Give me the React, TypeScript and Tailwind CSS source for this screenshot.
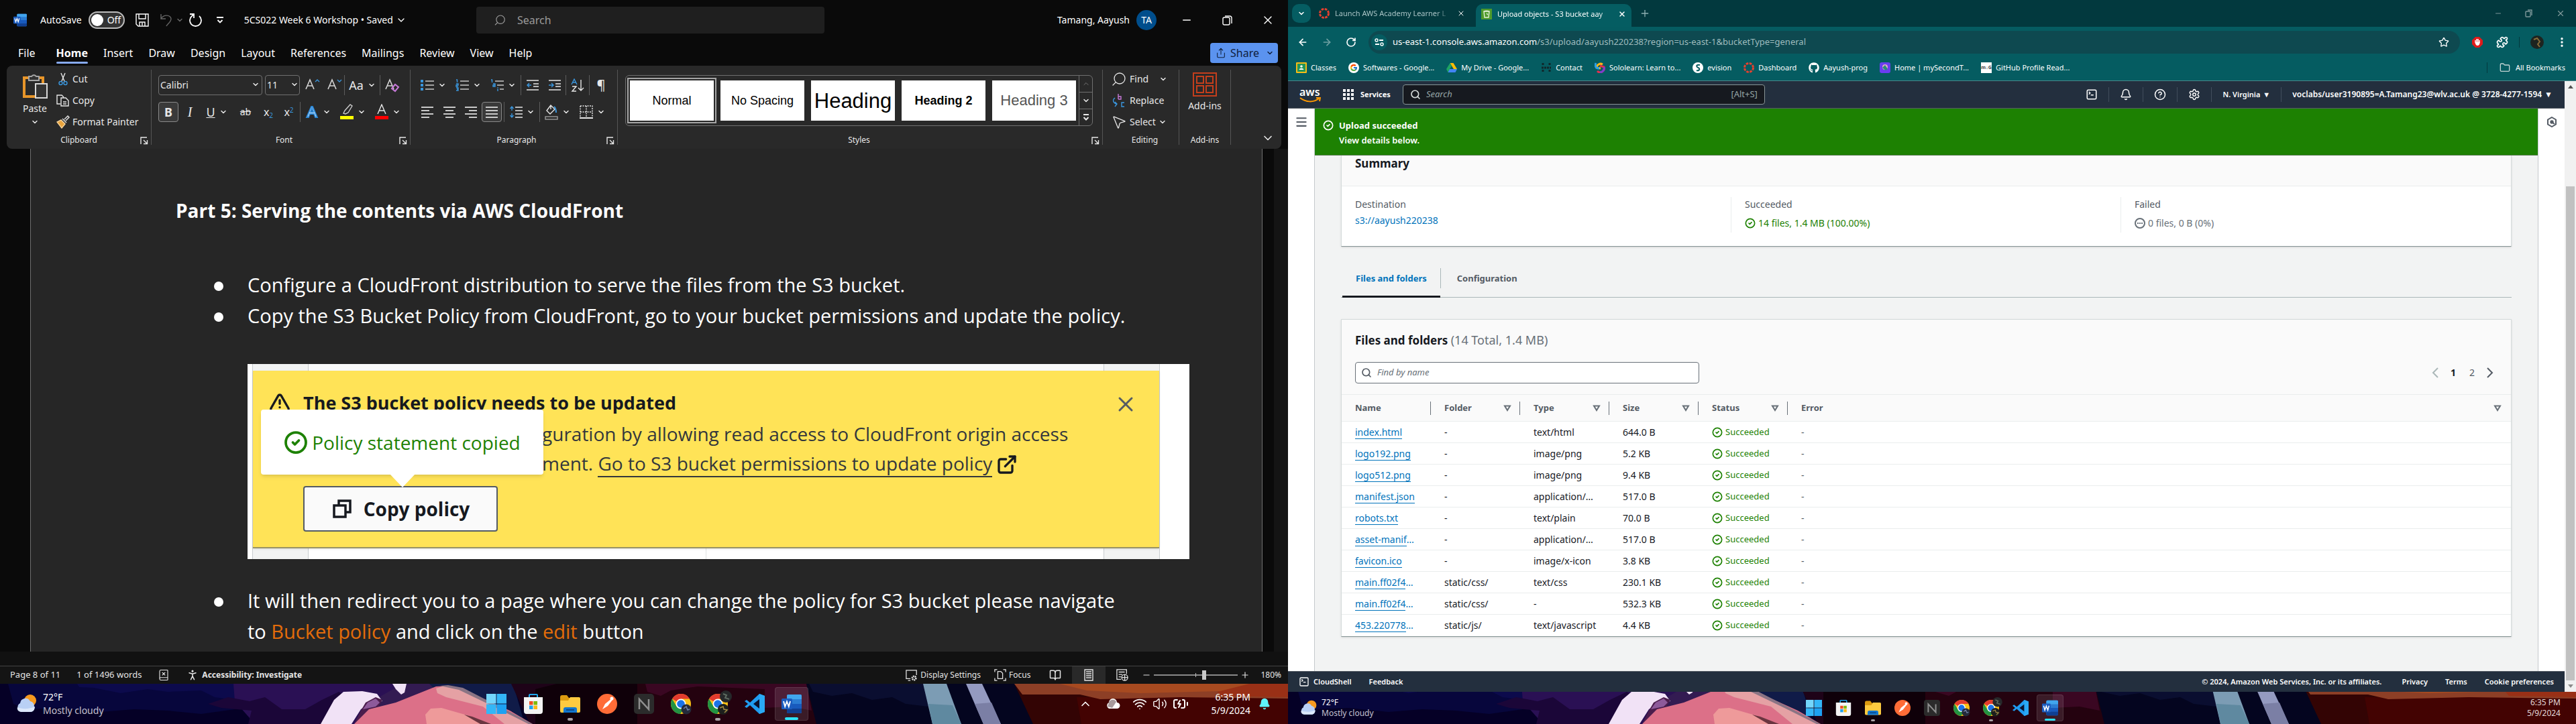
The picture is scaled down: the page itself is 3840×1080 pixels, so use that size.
import React from "react";
import {
  X, Minus, Plus, ChevronDown, ChevronUp, Search, Star, ArrowLeft, ArrowRight, RotateCw,
  MoreVertical, Folder, Menu, Bell, HelpCircle, Settings, SquareTerminal, Volume2, Wifi,
  BatteryCharging, MousePointer2, Puzzle, CircleCheck, ExternalLink, TriangleAlert, BookOpen,
  Share, BookX, PersonStanding,
} from "lucide-react";
import { FaGithub } from "react-icons/fa";
import { FcGoogle } from "react-icons/fc";

type Kids = { children?: React.ReactNode; className?: string };

const Svg = ({ children, className = "h-5 w-5", box = "0 0 20 20" }: Kids & { box?: string }) => (
  <svg viewBox={box} className={`shrink-0 ${className}`} fill="none" stroke="currentColor" strokeWidth="1.4" aria-hidden="true">
    {children}
  </svg>
);

const Chev = () => <ChevronDown className="h-3 w-3 shrink-0" strokeWidth={3} />;
const Rule = ({ className = "h-[30px] bg-[#5c5c5c]" }: { className?: string }) => <span className={`w-px shrink-0 ${className}`} />;

/* ---------- taskbar ---------- */

const Wallpaper = () => (
  <svg viewBox="0 0 1920 60" preserveAspectRatio="none" className="absolute bottom-0 left-0 h-[60px] w-full" aria-hidden="true">
    <rect width="1920" height="60" fill="#050026" />
    <path d="M12 0H350V38L300 45L250 40L200 38L150 42L90 36L40 38L20 30Z" fill="#07063c" />
    <path d="M115 0H350V24L320 20L300 10L250 12L220 8L180 14L140 6L118 5Z" fill="#0c0a4c" />
    <path d="M348 0H670V60H380L350 26Z" fill="#2a1054" />
    <path d="M310 30L340 20L372 26L395 20L420 38L455 38L480 24L505 12L520 20V60H370L375 40L330 36Z" fill="#1b0638" />
    <path d="M600 0H700V60H560L565 20Z" fill="#331b52" />
    <path d="M640 0H765L782 60H700Z" fill="#101b48" />
    <path d="M762 0H960V60H790Z" fill="#1e0318" />
    <path d="M798 8L830 0H950V60H798Z" fill="#0f0009" />
    <path d="M478 60L498 24L512 12L540 11L562 15L570 26L552 28L538 38L524 60Z" fill="#f1e2f6" />
    <path d="M538 40L545 28L560 20L570 24L564 34L550 38L528 60Z" fill="#4b1d4c" />
    <path d="M541 38L548 28L560 22L566 28L560 34Z" fill="#8d5a9a" />
    <path d="M585 0H606L603 13L598 16L590 8Z" fill="#f1e2f6" />
    <path d="M528 60L550 38L590 28L620 16L650 4L668 3L720 22L760 40L794 60Z" fill="#dc7088" />
    <path d="M650 7L662 3L684 6L730 28L770 48L792 60H752L720 34L665 20L652 14Z" fill="#e5a1a4" />
    <path d="M634 46L642 37L658 36L700 48L722 60H636Z" fill="#ee9a9a" />
    <path d="M692 46L704 49L732 60H716Z" fill="#6a3540" />
    <path d="M656 3L668 2L690 6L760 42L794 60H788L740 36L684 9Z" fill="#8a7484" />
    <path d="M950 0H1205L1218 60H950Z" fill="#24020f" />
    <path d="M962 0H1202L1210 40L1180 34L1140 36V8L1040 4L1000 10L985 18L965 12Z" fill="#3a0722" />
    <path d="M1202 0H1530L1540 60H1217Z" fill="#04051f" />
    <path d="M1206 0H1380L1384 34L1350 30L1330 20L1300 24L1270 14L1240 18L1212 12Z" fill="#0a0e30" />
    <path d="M1376 0H1411L1433 60H1390Z" fill="#7c9cb4" />
    <path d="M1384 30L1420 32L1433 60H1390Z" fill="#5f89a0" />
    <path d="M1440 0H1464L1492 60H1466Z" fill="#949ac0" />
    <path d="M1453 30L1478 28L1492 60H1466Z" fill="#7b7fa5" />
    <path d="M1512 0H1920V60H1540Z" fill="#330404" />
    <path d="M1605 20H1920V60H1612Z" fill="#430302" />
    <path d="M1512 0H1920V22L1760 20L1640 23L1610 16L1524 16Z" fill="#8d3f26" />
    <path d="M1580 0H1862L1860 10L1700 14L1620 10Z" fill="#a74a20" />
    <path d="M1862 0H1920V20L1820 18L1815 12Z" fill="#993016" />
  </svg>
);

const Weather = ({ className }: { className: string }) => (
  <svg viewBox="0 0 32 32" className={className} aria-hidden="true">
    <circle cx="21" cy="11" r="9" fill="#f79a1e" />
    <path d="M8 28a7 7 0 0 1-2-13 8 8 0 0 1 15-3 8 8 0 0 1 6 8c1 5-2 8-6 8Z" fill="#b9d0f5" />
    <path d="M8 28c-5 0-7-4-6-7 6 3 18 3 26-1 0 5-3 8-7 8Z" fill="#dce8fb" />
  </svg>
);

const ChromeLogo = ({ avatar = false }: { avatar?: boolean }) => (
  <svg viewBox="0 0 30 30" className="h-full w-full overflow-visible" aria-hidden="true">
    <circle cx="15" cy="15" r="15" fill="#fbc116" />
    <path d="M15 15L2 7.500A15 15 0 0 1 28 7.500H15Z" fill="#e33b2e" />
    <path d="M2 7.500A15 15 0 0 0 14 30L21.500 18.750 8.500 18.750Z" fill="#229342" />
    <circle cx="15" cy="15" r="7.500" fill="#fff" />
    <circle cx="15" cy="15" r="5.800" fill="#1a73e8" />
    {avatar ? (
      <>
        <circle cx="27" cy="4" r="9" fill="#26282a" />
        <path d="M23 0l5 2-2 4 6 2" stroke="#5d6a60" strokeWidth="2" fill="none" />
        <circle cx="23" cy="23" r="8" fill="#1d1f1d" />
        <path d="M18 21l5-2 1 4 5 1-4 4" stroke="#a58b45" strokeWidth="1.500" fill="none" />
      </>
    ) : (
      <>
        <circle cx="23" cy="23" r="7.500" fill="#242a3a" />
        <path d="M19 22l4-3 2 5 3-1" stroke="#7182a8" strokeWidth="1.500" fill="none" />
      </>
    )}
  </svg>
);

const WordLogo = () => (
  <svg viewBox="0 0 30 30" className="h-full w-full" aria-hidden="true">
    <rect x="8" y="1" width="22" height="28" rx="2" fill="#2b7cd3" />
    <path d="M8 3a2 2 0 0 1 2-2h18a2 2 0 0 1 2 2v5H8Z" fill="#41a5ee" />
    <rect x="8" y="15" width="22" height="7" fill="#185abd" />
    <path d="M8 22h22v5a2 2 0 0 1-2 2H10a2 2 0 0 1-2-2Z" fill="#103f91" />
    <rect x="0" y="7" width="16" height="16" rx="1.500" fill="#1b5cbf" />
    <path d="M3 11l2.200 8L8 11.500l2.800 7.500L13 11" stroke="#fff" strokeWidth="1.900" fill="none" />
  </svg>
);

const taskIcons: { name: string; mark?: "dot" | "bar"; art: React.ReactNode }[] = [
  { name: "Start", art: (
    <svg viewBox="0 0 30 30" className="h-full w-full"><g fill="#33b6f7"><rect x="0" y="0" width="14.500" height="14.500" fill="#73d6fb" /><rect x="15.500" y="0" width="14.500" height="14.500" /><rect x="0" y="15.500" width="14.500" height="14.500" /><rect x="15.500" y="15.500" width="14.500" height="14.500" fill="#1da1f2" /></g></svg>) },
  { name: "Microsoft Store", art: (
    <svg viewBox="0 0 30 30" className="h-full w-full"><path d="M9 6V2a1 1 0 0 1 1-1h10a1 1 0 0 1 1 1v4" stroke="#1fa8ee" strokeWidth="2" fill="none" /><path d="M1 5h28v21a4 4 0 0 1-4 4H5a4 4 0 0 1-4-4Z" fill="#f4f4f4" /><rect x="9" y="11" width="5.500" height="5.500" fill="#f04e23" /><rect x="15.500" y="11" width="5.500" height="5.500" fill="#7eb900" /><rect x="9" y="17.500" width="5.500" height="5.500" fill="#1fa2ee" /><rect x="15.500" y="17.500" width="5.500" height="5.500" fill="#fdb813" /></svg>) },
  { name: "File Explorer", mark: "dot", art: (
    <svg viewBox="0 0 30 30" className="h-full w-full"><path d="M0 5a3 3 0 0 1 3-3h7l3 4h14v6H0Z" fill="#dc9a10" /><path d="M0 10l12 0 3-5h13a2 2 0 0 1 2 2v19a2 2 0 0 1-2 2H2a2 2 0 0 1-2-2Z" fill="#fdca40" /><path d="M5 28v-5a3 3 0 0 1 3-3h14a3 3 0 0 1 3 3v5Z" fill="#1277cf" /><path d="M9 24h12" stroke="#0b4a8c" strokeWidth="2" /></svg>) },
  { name: "Postman", art: (
    <svg viewBox="0 0 30 30" className="h-full w-full"><circle cx="15" cy="15" r="15" fill="#ff6c37" /><path d="M23 6l-11 9-4 8 8-5 7-9Z" fill="#fff" /><circle cx="22" cy="7" r="2.500" fill="#fff" /></svg>) },
  { name: "Notion", art: (
    <svg viewBox="0 0 30 30" className="h-full w-full"><rect width="30" height="30" rx="5" fill="#2b2b2b" /><path d="M8 23V8l14 15V8" stroke="#8f8f8f" strokeWidth="2.500" fill="none" /></svg>) },
  { name: "Chrome", art: <ChromeLogo /> },
  { name: "Chrome profile", mark: "dot", art: <ChromeLogo avatar /> },
  { name: "Visual Studio Code", art: (
    <svg viewBox="0 0 30 30" className="h-full w-full"><path d="M22 0l8 3v24l-8 3L8 17l-5 4-3-2 5-4-5-4 3-2 5 4Z" fill="#1f9cf0" /><path d="M22 8v14l-9-7Z" fill="#0b1330" /><path d="M22 0l8 3v24l-8 3Z" fill="#2aa9f5" /></svg>) },
  { name: "Word", mark: "bar", art: <WordLogo /> },
];

const Taskbar = ({ large }: { large: boolean }) => (
  <footer className={`relative grid shrink-0 grid-cols-[1fr_auto_1fr] items-center overflow-hidden text-white ${large ? "h-[60px] text-sm" : "h-12 text-xs"}`}>
    <Wallpaper />
    <div className={`relative flex items-center ${large ? "gap-2 pl-6" : "gap-1.5 pl-[18px]"}`}>
      <Weather className={large ? "h-8 w-8" : "h-[26px] w-[26px]"} />
      <div className={large ? "leading-5" : "leading-4"}>
        <div>72°F</div>
        <div className="text-[#c3c0cf]">Mostly cloudy</div>
      </div>
    </div>
    <nav aria-label="Taskbar" className={`relative flex items-center ${large ? "gap-[5px]" : "gap-1"}`}>
      {taskIcons.map((t) => (
        <button key={t.name} aria-label={t.name} className={`relative flex items-center justify-center rounded ${large ? "h-[50px] w-[50px]" : "h-10 w-10"} ${t.mark === "bar" ? "border border-white/10 bg-white/10" : ""}`}>
          <span className={large ? "h-[30px] w-[30px]" : "h-6 w-6"}>{t.art}</span>
          {t.mark === "dot" && <span className={`absolute bottom-0 rounded-full bg-[#a9a2a6] ${large ? "h-1 w-2" : "h-[3px] w-1.5"}`} />}
          {t.mark === "bar" && <span className={`absolute bottom-0 rounded-full bg-[#2ce3fb] ${large ? "h-1 w-5" : "h-[3px] w-4"}`} />}
        </button>
      ))}
    </nav>
    {large ? (
      <div className="relative flex items-center justify-end pr-[26px]">
        <ChevronUp className="mr-5 h-5 w-5" />
        <Svg className="mr-[18px] h-[22px] w-[22px]" box="0 0 22 22">
          <path d="M5 18a5 5 0 0 1 0-9 6 6 0 0 1 12 0 4.500 4.500 0 0 1 0 9Z" fill="#fff" stroke="none" />
          <path d="M5 9a6 6 0 0 1 11-1l-6 9-7-2Z" fill="#a79a9c" stroke="none" />
        </Svg>
        <Wifi className="mr-2 h-[22px] w-[22px]" />
        <Volume2 className="mr-2 h-[22px] w-[22px]" strokeWidth={1.5} />
        <BatteryCharging className="mr-4 h-6 w-6" />
        <div className="mr-3 w-[76px] text-right leading-5">
          <div>6:35 PM</div>
          <div>5/9/2024</div>
        </div>
        <Bell className="h-[18px] w-[18px] text-[#5ff3fb]" fill="#5ff3fb" />
      </div>
    ) : (
      <div className="relative pr-[23px] text-right leading-4 text-[#e2d8d8]">
        <div>6:35 PM</div>
        <div>5/9/2024</div>
      </div>
    )}
  </footer>
);

/* ---------- Word ---------- */

const Group = ({ label, className = "", launcher = true, children }: Kids & { label: string; launcher?: boolean }) => (
  <section aria-label={label} className={`relative flex shrink-0 flex-col border-r border-[#555] pt-2 ${className}`}>
    {children}
    <div className="mt-auto text-center text-xs leading-[14px]">{label}</div>
    {launcher && (
      <button aria-label={`${label} options`} className="absolute bottom-0 right-1">
        <Svg className="h-3 w-3" box="0 0 12 12"><path d="M1 11V1h9M5 5l5 5M10.500 5v5.500H5" /></Svg>
      </button>
    )}
  </section>
);

const Tool = ({ name, className = "w-[34px]", drop = false, children }: Kids & { name: string; drop?: boolean }) => (
  <button aria-label={name} className={`flex h-[30px] shrink-0 items-center justify-center gap-1.5 ${drop ? "w-[52px]" : className}`}>
    {children}
    {drop && <Chev />}
  </button>
);

const Lines = ({ rows }: { rows: [number, number][] }) => (
  <Svg className="h-5 w-5 text-[#c9c9c9]">
    {rows.map(([a, b], i) => <path key={i} d={`M${a} ${3 + i * 5}H${b}`} strokeWidth="1.800" />)}
  </Svg>
);

const LetterA = ({ children, color = "#d4d4d4" }: { children?: React.ReactNode; color?: string }) => (
  <Svg className="h-6 w-6" box="0 0 24 24">
    <path d="M3 18L9 4l6 14M5.500 13h7" stroke={color} strokeWidth="1.600" />
    {children}
  </Svg>
);

const styleTiles: [string, string][] = [
  ["Normal", "text-lg text-black"],
  ["No Spacing", "text-lg text-black"],
  ["Heading", "text-[31px] text-black"],
  ["Heading 2", "text-lg font-bold text-black"],
  ["Heading 3", "text-[22px] text-[#555]"],
];

const Bars = ({ marks }: { marks: "dots" | "numbers" | "levels" }) => (
  <Svg className="h-5 w-5">
    <g stroke="#c9c9c9" strokeWidth="1.500">
      <path d="M7 4H20" /><path d={marks === "levels" ? "M10 10H20" : "M7 10H20"} /><path d={marks === "levels" ? "M14 16H20" : "M7 16H20"} />
    </g>
    <g stroke="#3a96dd" strokeWidth="1.400">
      {marks === "dots" && <g fill="#3a96dd" stroke="none"><rect x="0" y="2" width="4" height="4" /><rect x="0" y="8" width="4" height="4" /><rect x="0" y="14" width="4" height="4" /></g>}
      {marks === "numbers" && <path d="M1 2h1.500v4M1 8h3v2H1v2h3M1 14h3v4H1M2 16h2" />}
      {marks === "levels" && <path d="M1 2h1.500v4M4 8h3v4H4v-2h3M11 13v1M11 15v4" />}
    </g>
  </Svg>
);

const Ribbon = () => (
  <div className="mx-2.5 flex h-[124px] shrink-0 overflow-hidden rounded-lg bg-[#292929] py-1.5 text-sm text-[#e8e8e8]">
    <Group label="Clipboard" className="w-[216px]">
      <div className="-mt-2 flex gap-2.5 pl-5">
        <button className="mt-1 flex w-11 flex-col items-center">
          <Svg className="h-10 w-10" box="0 0 40 40">
            <path d="M10 8H4v28h16M26 8h6v8" stroke="#e8962a" strokeWidth="4" />
            <path d="M11 12V6h4a4 4 0 0 1 7 0h4v6Z" stroke="#a5a5a5" strokeWidth="2" fill="#333" />
            <rect x="21" y="17" width="17" height="21" fill="#333" stroke="#d8d8d8" strokeWidth="2" />
          </Svg>
          <span className="mt-1 leading-5">Paste</span>
          <ChevronDown className="mt-1 h-3 w-3" strokeWidth={3} />
        </button>
        <div className="flex flex-col">
          <button className="flex h-7 items-center gap-1">
            <Svg><path d="M7 1l5 12M13 1L8 13" /><g stroke="#3a96dd"><circle cx="6.500" cy="16" r="2.500" /><circle cx="13.500" cy="16" r="2.500" /></g></Svg>Cut
          </button>
          <button className="my-1 flex h-7 items-center gap-1">
            <Svg><path d="M6 15H1V2h7l3 3M7 6h7l4 4v8H7ZM10 12h5M10 15h5" /></Svg>Copy
          </button>
          <button className="flex h-7 items-center gap-1">
            <Svg><path d="M12 6l5-5 2 2-5 5M9 5l6 6M7 7l6 6" /><path d="M7 7L1 10l7 9 5-6Z" fill="#e8a33d" stroke="#f5d29a" /></Svg>Format Painter
          </button>
        </div>
      </div>
    </Group>

    <Group label="Font" className="w-[386px] gap-2.5 pl-2.5">
      <div className="flex items-center">
        <span className="relative mr-1">
          <select aria-label="Font name" className="h-[30px] w-[155px] appearance-none rounded border border-[#707070] bg-[#292929] pl-0.5"><option>Calibri</option></select>
          <ChevronDown className="pointer-events-none absolute right-1 top-2 h-3 w-3" strokeWidth={3} />
        </span>
        <span className="relative">
          <select aria-label="Font size" className="h-[30px] w-[52px] appearance-none rounded border border-[#707070] bg-[#292929] pl-0.5"><option>11</option></select>
          <ChevronDown className="pointer-events-none absolute right-0.5 top-2 h-3 w-3" strokeWidth={3} />
        </span>
        <Tool name="Grow font" className="w-9"><LetterA><path d="M17 7l3-3 3 3" stroke="#3a96dd" /></LetterA></Tool>
        <Tool name="Shrink font" className="w-[30px]"><LetterA><path d="M17 4l3 3 3-3" stroke="#3a96dd" /></LetterA></Tool>
        <Rule />
        <Tool name="Change case" drop><span className="text-lg">Aa</span></Tool>
        <Rule />
        <Tool name="Clear formatting"><LetterA><path d="M12 17l5-6 5 4-5 6Z" stroke="#c679d8" strokeWidth="2" /></LetterA></Tool>
      </div>
      <div className="flex items-center">
        <Tool name="Bold" className="w-[30px] rounded border border-[#8a8a8a] bg-[#3a3a3a] text-lg font-bold">B</Tool>
        <Tool name="Italic" className="w-[34px] font-['Liberation_Serif'] text-xl italic">I</Tool>
        <Tool name="Underline" className="w-[46px]"><span className="text-lg underline">U</span><Chev /></Tool>
        <Tool name="Strikethrough" className="w-10 line-through">ab</Tool>
        <Tool name="Subscript" className="w-7 text-base"><span>x<sub className="text-[10px] text-[#3a96dd]">2</sub></span></Tool>
        <Tool name="Superscript" className="w-[33px] text-base"><span>x<sup className="text-[10px] text-[#3a96dd]">2</sup></span></Tool>
        <Rule />
        <Tool name="Text effects" drop><Svg><path d="M2 18L9 2h2l7 16h-3l-2-5H7l-2 5ZM8 10h4l-2-5Z" fill="#cfe6fb" stroke="#2b88d8" strokeWidth="1.800" /></Svg></Tool>
        <Tool name="Highlight colour" drop><Svg className="h-6 w-5" box="0 0 20 24"><path d="M5 14l2-4 8-9 3 2-6 10-4 2Z" stroke="#c9c9c9" /><rect x="0" y="18" width="20" height="5" fill="#ff0" stroke="none" /></Svg></Tool>
        <Tool name="Font colour" drop><Svg className="h-6 w-5" box="0 0 20 24"><path d="M4 15L10 1l6 14M6.500 10h7" /><rect x="0" y="18" width="20" height="5" fill="#f00" stroke="none" /></Svg></Tool>
      </div>
    </Group>

    <Group label="Paragraph" className="w-[309px] gap-2.5 pl-2">
      <div className="flex items-center">
        <Tool name="Bullets" drop><Bars marks="dots" /></Tool>
        <Tool name="Numbering" drop><Bars marks="numbers" /></Tool>
        <Tool name="Multilevel list" drop><Bars marks="levels" /></Tool>
        <Rule />
        <Tool name="Decrease indent"><Svg><path d="M1 3H19M11 8H19M11 12H19M1 17H19" /><path d="M8 10H2M5 7l-3 3 3 3" stroke="#3a96dd" /></Svg></Tool>
        <Tool name="Increase indent" className="w-8"><Svg><path d="M1 3H19M11 8H19M11 12H19M1 17H19" /><path d="M1 10H8M5 7l3 3-3 3" stroke="#3a96dd" /></Svg></Tool>
        <Rule />
        <Tool name="Sort"><Svg><path d="M1 9L5 1l4 8M2 6h6" stroke="#3a96dd" /><path d="M2 12h6l-6 7h6M15 2v16M11 14l4 4 4-4" /></Svg></Tool>
        <Rule />
        <Tool name="Show marks" className="w-[34px] text-xl">¶</Tool>
      </div>
      <div className="flex items-center">
        <Tool name="Align left"><Lines rows={[[1, 19], [1, 13], [1, 19], [1, 13]]} /></Tool>
        <Tool name="Centre" className="w-8"><Lines rows={[[1, 19], [4, 16], [1, 19], [4, 16]]} /></Tool>
        <Tool name="Align right" className="w-8"><Lines rows={[[1, 19], [7, 19], [1, 19], [7, 19]]} /></Tool>
        <Tool name="Justify" className="mr-[3px] w-[30px] rounded border border-[#8a8a8a] bg-[#3a3a3a]"><Lines rows={[[1, 19], [1, 19], [1, 19], [1, 19]]} /></Tool>
        <Rule />
        <Tool name="Line spacing" drop><Svg><path d="M9 3H20M9 8H20M9 13H20M9 18H20" /><path d="M4 2v6M1.500 5L4 2l2.500 3M4 18v-6M1.500 15L4 18l2.500-3" stroke="#3a96dd" /></Svg></Tool>
        <Rule />
        <Tool name="Shading" drop><Svg className="h-6 w-5" box="0 0 20 24"><path d="M9 2l-6 8 5 5 7-7ZM9 2v6" /><path d="M14 4c3 3 3 6 3 9" stroke="#3a96dd" strokeWidth="2" /><rect x="1" y="19" width="18" height="4" stroke="#999" /></Svg></Tool>
        <Tool name="Borders" drop><Svg><path d="M1 1H19V18M1 1V18M10 1V18M1 10H19" strokeDasharray="2 1.500" /><path d="M0 19H20" strokeWidth="2" /></Svg></Tool>
      </div>
    </Group>

    <Group label="Styles" className="w-[723px] pl-[11px] pr-3.5">
      <div className="flex h-[76px] rounded-md border border-[#707070]">
        <div className="flex flex-1 items-center gap-2.5 pl-1.5 font-['Liberation_Sans',sans-serif]">
          {styleTiles.map(([name, look], i) => (
            <button key={name} className={`h-[60px] w-[125px] whitespace-nowrap bg-white leading-none ${look} ${i === 0 ? "outline-2 outline-offset-2 outline-[#a5a5a5]" : ""}`}>{name}</button>
          ))}
        </div>
        <div className="flex w-5 flex-col divide-y divide-[#707070] border-l border-[#707070]">
          <button aria-label="Scroll up" className="flex flex-1 items-center justify-center text-[#777]"><ChevronUp className="h-3 w-3" /></button>
          <button aria-label="Scroll down" className="flex flex-1 items-center justify-center"><Chev /></button>
          <button aria-label="More styles" className="flex flex-1 items-center justify-center"><Svg className="h-3 w-3" box="0 0 12 12"><path d="M2 2h8M2.500 6L6 9.500 9.500 6" strokeWidth="2" /></Svg></button>
        </div>
      </div>
    </Group>

    <Group label="Editing" launcher={false} className="w-[114px] pl-3">
      <div className="-mt-2 flex flex-col items-start gap-1">
        <button className="flex h-7 items-center gap-1"><Search className="h-6 w-6 -scale-x-100" strokeWidth={1.3} />Find<span className="ml-3"><Chev /></span></button>
        <button className="flex h-7 items-center gap-1"><Svg className="h-6 w-6" box="0 0 24 24"><path d="M11 2v8M11 6h4v4h-4" stroke="#c679d8" /><path d="M6 8c-4 3-3 8 3 9M6 14l3 3-3 4M20 15h-4v6h4" stroke="#3a96dd" /></Svg>Replace</button>
        <button className="flex h-7 items-center gap-1"><MousePointer2 className="h-6 w-6" strokeWidth={1.3} />Select<Chev /></button>
      </div>
    </Group>

    <Group label="Add-ins" launcher={false} className="w-[77px]">
      <button className="-mt-1 flex flex-col items-center">
        <Svg className="h-9 w-9 text-[#c43e1c]" box="0 0 36 36"><g strokeWidth="2"><rect x="1" y="1" width="34" height="34" /><rect x="6" y="6" width="10" height="10" /><rect x="20" y="6" width="10" height="10" /><rect x="6" y="20" width="10" height="10" /><rect x="20" y="20" width="10" height="10" /></g></Svg>
        <span className="mt-1 leading-5">Add-ins</span>
      </button>
    </Group>
    <button aria-label="Collapse ribbon" className="ml-auto mr-2.5 self-end"><ChevronDown className="h-5 w-5" /></button>
  </div>
);

const Callout = () => (
  <figure className="ml-[107px] flex h-[291px] w-[1404px] bg-white pl-[7px] pr-11">
    <div className="relative flex flex-1 border-x border-[#c9cdd0] bg-[#f2f3f3]">
      <div className="mx-[82px] flex flex-1 flex-col border-x border-[#c9cdd0] bg-white">
        <span className="h-2.5 bg-[#fafafa]" />
        <span className="mt-auto h-4 w-1/2 border-r border-[#e0e2e4]" />
      </div>
      <div className="absolute inset-x-0 top-2.5 h-[265px] border-b-2 border-[#9b9464] bg-[#ffe357] pl-[75px] text-[28px] text-[#16191f] shadow-sm">
        <div className="flex h-[68px] items-end justify-between pr-8 leading-10">
          <h3 className="text-[27px] font-bold">The S3 bucket policy needs to be updated</h3>
          <TriangleAlert className="absolute left-6 top-8 h-8 w-8" strokeWidth={2.5} />
          <button aria-label="Dismiss" className="text-[#545b64]"><X className="h-9 w-9" /></button>
        </div>
        <p className="mt-1 pl-[356px] leading-[44px] text-[#33373c]">
          guration by allowing read access to CloudFront origin access
          <br />
          ment.{" "}
          <a href="#policy" className="border-b-2 border-[#33373c]">Go to S3 bucket permissions to update policy</a>
          <ExternalLink className="ml-1 inline h-9 w-9 pb-1 text-[#16191f]" strokeWidth={2.5} />
        </p>
        <button className="mt-3 flex h-[68px] w-[290px] items-center justify-center gap-4 rounded-sm border-2 border-[#545b64] bg-[#fafafa] font-bold">
          <Svg className="h-8 w-8" box="0 0 32 32"><g strokeWidth="3.500"><rect x="4" y="11" width="17" height="17" /><path d="M11 10V4h17v17h-6" /></g></Svg>
          Copy policy
        </button>
        <div role="status" className="absolute left-3 top-[58px] flex h-[97px] w-[421px] items-center justify-center gap-1.5 whitespace-nowrap rounded-sm bg-white text-[#1d8102] shadow-md">
          <CircleCheck className="h-9 w-9" strokeWidth={2.5} />
          Policy statement copied
          <svg viewBox="0 0 38 20" className="absolute left-[192px] top-[96px] h-5 w-[38px]" aria-hidden="true"><path d="M0 0H38L19 20Z" fill="#fff" /></svg>
        </div>
      </div>
    </div>
  </figure>
);

const Bullet = ({ children }: Kids) => (
  <li className="flex gap-9 pl-[57px]">
    <span className="mt-[18px] h-3.5 w-3.5 shrink-0 rounded-full bg-white" />
    <span>{children}</span>
  </li>
);

const Word = () => (
  <section aria-label="Word" className="flex min-w-0 flex-1 flex-col bg-[#0a0a0a] font-['Noto_Sans',sans-serif] text-white">
    <header className="flex h-[60px] shrink-0 items-center text-sm">
      <div className="flex w-[37%] items-center pl-5">
        <span className="h-5 w-5"><WordLogo /></span>
        <label className="ml-5 flex items-center gap-2.5">AutoSave
          <input type="checkbox" className="peer sr-only" />
          <span className="flex h-[26px] w-[54px] items-center gap-1.5 rounded-full border-2 border-[#bdbdbd] bg-[#333] pl-0.5"><span className="h-[18px] w-[18px] rounded-full bg-white" />Off</span>
        </label>
        <button aria-label="Save" className="ml-4"><Svg><path d="M1 1h18v18H4l-3-3ZM5 1v7h10V1M6 19v-6h8v6M10 14v4" /></Svg></button>
        <button aria-label="Undo" className="ml-4 flex items-center gap-1 text-[#666]"><Svg><path d="M2 1v7h7M2 8C6 1 16 2 17 8c0 5-5 7-7 11" /></Svg><Chev /></button>
        <button aria-label="Redo" className="ml-2"><Svg><path d="M1 1h6v6M15 4a8.500 8.500 0 1 1-11 0l3-3" strokeWidth="1.800" /></Svg></button>
        <button aria-label="Customise toolbar" className="ml-5"><Svg className="h-3 w-3" box="0 0 12 12"><path d="M1 2h10M2.500 6L6 9.500 9.500 6" strokeWidth="1.800" /></Svg></button>
        <button className="ml-[30px] flex items-center gap-1 whitespace-nowrap">5CS022 Week 6 Workshop • Saved <ChevronDown className="h-4 w-4" /></button>
      </div>
      <label className="flex h-10 w-[27%] items-center gap-4 rounded bg-[#1f1f1f] pl-[26px]">
        <Search className="h-5 w-5 -scale-x-100 text-[#9a9a9a]" strokeWidth={1.5} />
        <input aria-label="Search" placeholder="Search" className="w-full bg-transparent text-base placeholder:text-[#9a9a9a]" />
      </label>
      <div className="ml-auto flex items-center pr-5">
        <span>Tamang, Aayush</span>
        <span className="ml-2.5 flex h-[30px] w-[30px] items-center justify-center rounded-full bg-[#004e8c]">TA</span>
        <button aria-label="Minimise" className="ml-9"><Minus className="h-[18px] w-[18px]" /></button>
        <button aria-label="Restore" className="ml-11"><Svg className="h-4 w-4" box="0 0 16 16"><rect x="1" y="4" width="10" height="11" rx="2" /><path d="M4 2h7a3 3 0 0 1 3 3v8" /></Svg></button>
        <button aria-label="Close" className="ml-[42px]"><X className="h-5 w-5" strokeWidth={1.6} /></button>
      </div>
    </header>

    <div className="flex h-[38px] shrink-0 items-center justify-between pl-[27px] pr-[15px] text-base">
      <nav aria-label="Ribbon tabs" className="flex gap-[23px]">
        {["File", "Home", "Insert", "Draw", "Design", "Layout", "References", "Mailings", "Review", "View", "Help"].map((t) => (
          <button key={t} className={t === "Home" ? "relative ml-2 font-bold" : ""}>
            {t}
            {t === "Home" && <span className="absolute inset-x-0 -bottom-1 h-[3px] rounded-full bg-[#86a9f0]" />}
          </button>
        ))}
      </nav>
      <button className="flex h-[30px] w-[101px] items-center gap-1.5 rounded bg-[#5b93ef] pl-2 text-[#10203c]"><Share className="h-4 w-4" strokeWidth={1.6} />Share<span className="ml-1"><Chev /></span></button>
    </div>

    <Ribbon />

    <main className="flex min-h-0 flex-1 justify-between pl-[45px]">
      <article className="w-[1837px] overflow-hidden border-x border-[#707070] bg-[#262626] pl-[216px] pt-[69px] font-['Open_Sans',sans-serif] text-[29px] leading-[46px]">
        <h2 className="mb-[65px] text-[28px] font-bold leading-[46px]">Part 5: Serving the contents via AWS CloudFront</h2>
        <ul>
          <Bullet>Configure a CloudFront distribution to serve the files from the S3 bucket.</Bullet>
          <Bullet>Copy the S3 Bucket Policy from CloudFront, go to your bucket permissions and update the policy.</Bullet>
        </ul>
        <div className="mb-[39px] mt-[49px]"><Callout /></div>
        <ul>
          <Bullet>
            It will then redirect you to a page where you can change the policy for S3 bucket please navigate
            <br />
            to <span className="text-[#e36c0a]">Bucket policy</span> and click on the <span className="text-[#e36c0a]">edit</span> button
          </Bullet>
        </ul>
      </article>
      <div className="w-[21px] bg-[#141414]" />
    </main>
    <div className="h-[21px] shrink-0 bg-[#111]" />

    <div className="flex h-[27px] shrink-0 items-center border-t border-[#444] bg-[#141414] pl-[15px] pr-2.5 text-xs text-[#e4e4e4]">
      <span className="text-[13px]">Page 8 of 11</span>
      <span className="ml-6 text-[13px]">1 of 1496 words</span>
      <BookX className="ml-6 h-[18px] w-[18px]" strokeWidth={1.5} />
      <button className="ml-6 flex items-center gap-1 font-bold"><PersonStanding className="h-5 w-5" strokeWidth={1.8} />Accessibility: Investigate</button>
      <div className="ml-auto flex h-full items-center">
        <button className="flex items-center gap-1"><Svg className="h-[18px] w-[18px]"><path d="M8 16H1V2h17v8M4 19h4" /><circle cx="14" cy="15" r="3" strokeWidth="3" strokeDasharray="2 1" /></Svg>Display Settings</button>
        <button className="ml-5 flex items-center gap-1"><Svg className="h-[18px] w-[18px]"><path d="M1 5V1h4M15 1h4v4M1 15v4h4M15 19h4v-4M6 4h5l3 3v9H6Z" /></Svg>Focus</button>
        <button aria-label="Read mode" className="ml-7"><BookOpen className="h-[18px] w-[18px]" /></button>
        <button aria-label="Print layout" className="ml-4 flex h-full w-[50px] items-center justify-center bg-[#292929]"><Svg className="h-[18px] w-3.5" box="0 0 14 18"><path d="M1 1h12v16H1ZM3 4h8M3 7h8M3 10h8M3 13h8" /></Svg></button>
        <button aria-label="Web layout" className="ml-4"><Svg className="h-[18px] w-[18px]"><path d="M8 17H1V1h16v7M4 5h10M4 9h6M4 13h4" /><circle cx="14" cy="14" r="5" /><path d="M9 14h10M14 9v10" /></Svg></button>
        <Minus className="ml-5 h-3.5 w-3.5" />
        <div className="relative ml-1 flex h-3.5 w-[125px] items-center">
          <span className="h-0.5 w-full bg-[#8a8a8a]" />
          <span className="absolute left-[62px] top-1 h-1.5 w-px bg-[#bbb]" />
          <span className="absolute left-[72px] h-3.5 w-1.5 bg-[#c9c9c9]" />
        </div>
        <Plus className="ml-1 h-3.5 w-3.5" />
        <span className="ml-4">180%</span>
      </div>
    </div>
    <Taskbar large />
  </section>
);

/* ---------- browser ---------- */

const Ring = () => (
  <svg viewBox="0 0 16 16" className="h-4 w-4 shrink-0" aria-hidden="true"><circle cx="8" cy="8" r="6.500" fill="none" stroke="#e8402f" strokeWidth="3" strokeDasharray="3.600 1.500" /></svg>
);

const bookmarks: [string, React.ReactNode][] = [
  ["Classes", <Svg className="h-4 w-4" box="0 0 16 16"><rect width="16" height="16" rx="1" fill="#f6bb16" stroke="none" /><rect x="2" y="2" width="12" height="12" fill="#22965a" stroke="none" /><circle cx="8" cy="6" r="1.800" fill="#fff" stroke="none" /><path d="M4.500 11c1-3 6-3 7 0Z" fill="#fff" stroke="none" /></Svg>],
  ["Softwares - Google...", <span className="rounded-full bg-white p-0.5"><FcGoogle className="h-3 w-3" /></span>],
  ["My Drive - Google...", <Svg className="h-4 w-4" box="0 0 16 16"><path d="M5.500 1h5L16 10h-5Z" fill="#fbbc04" stroke="none" /><path d="M5.500 1L0 10l2.500 5L8 5Z" fill="#1ea362" stroke="none" /><path d="M5 10h11l-2.500 5h-11Z" fill="#4285f4" stroke="none" /></Svg>],
  ["Contact", <Svg className="h-4 w-4 text-[#10262a]" box="0 0 16 16"><path d="M3 1v4M3 11v4M13 1v4M13 11v4M1 8h14" strokeWidth="3" strokeDasharray="3 1" /></Svg>],
  ["Sololearn: Learn to...", <Svg className="h-4 w-4" box="0 0 16 16"><path d="M12 3A6 6 0 0 0 3 8l6 1" stroke="#fdb515" strokeWidth="3" /><path d="M2 1c-2 5 0 8 5 8" stroke="#2b9fe8" strokeWidth="3" /><path d="M4 13a6 6 0 0 0 10-6L8 5" stroke="#e2304f" strokeWidth="3" /><path d="M14 7c1 4-1 7-6 8" stroke="#7b3fd0" strokeWidth="3" /></Svg>],
  ["evision", <Svg className="h-4 w-4" box="0 0 16 16"><circle cx="8" cy="8" r="8" fill="#fff" stroke="none" /><path d="M11 4c-4-1-6 1-4 3l3 2c1 2-1 4-4 3" stroke="#055c61" strokeWidth="2" /></Svg>],
  ["Dashboard", <Ring />],
  ["Aayush-prog", <FaGithub className="h-4 w-4" />],
  ["Home | mySecondT...", <Svg className="h-4 w-4" box="0 0 16 16"><rect width="16" height="16" rx="3" fill="#6a3df0" stroke="none" /><circle cx="8" cy="7" r="4" fill="#e2a7c7" stroke="none" /><path d="M4 8l4-4 4 6-3 2Z" fill="#2b8c7a" stroke="none" /></Svg>],
  ["GitHub Profile Read...", <span className="flex h-4 w-4 items-center justify-center bg-white text-[7px] font-bold text-[#444]">m↓G</span>],
];

const files: [string, boolean, string, string, string][] = [
  ["index.html", false, "-", "text/html", "644.0 B"],
  ["logo192.png", false, "-", "image/png", "5.2 KB"],
  ["logo512.png", false, "-", "image/png", "9.4 KB"],
  ["manifest.json", false, "-", "application/…", "517.0 B"],
  ["robots.txt", false, "-", "text/plain", "70.0 B"],
  ["asset-manif", true, "-", "application/…", "517.0 B"],
  ["favicon.ico", false, "-", "image/x-icon", "3.8 KB"],
  ["main.ff02f4", true, "static/css/", "text/css", "230.1 KB"],
  ["main.ff02f4", true, "static/css/", "-", "532.3 KB"],
  ["453.220778", true, "static/js/", "text/javascript", "4.4 KB"],
];

const SortMark = () => (
  <svg viewBox="0 0 12 10" className="h-2.5 w-3 shrink-0" aria-hidden="true"><path d="M2 1.500H10L6 8Z" fill="none" stroke="#687078" strokeWidth="2" /></svg>
);

const NavRule = () => <Rule className="h-[22px] bg-[#414d5c]" />;

const Browser = () => (
  <section aria-label="Browser" className="flex min-w-0 flex-1 flex-col bg-[#055c61] font-['Noto_Sans',sans-serif] text-white">
    <div className="flex h-10 shrink-0 items-center bg-[#02393e] pl-1.5 text-[11px]">
      <button aria-label="Search tabs" className="flex h-7 w-7 items-center justify-center rounded-[10px] bg-[#055d62]"><Chev /></button>
      <button className="ml-3 flex items-center text-[#a9c3c5]">
        <Ring />
        <span className="ml-2 w-[172px] whitespace-nowrap text-left [mask-image:linear-gradient(to_right,black_88%,transparent)]">Launch AWS Academy Learner L</span>
      </button>
      <button aria-label="Close tab" className="ml-2.5"><X className="h-3 w-3" /></button>
      <div className="relative ml-4 mt-1.5 flex h-[34px] w-[232px] items-center rounded-t-[10px] bg-[#055d62] pb-1 pl-2">
        <Svg className="h-4 w-4" box="0 0 16 16"><rect width="16" height="16" fill="#4f9a2c" stroke="none" /><path d="M4 4l1 9h6l1-9ZM4 4c2-1 6-1 8 0" stroke="#e4f2d8" /><path d="M8 7l2 2" stroke="#e4f2d8" /></Svg>
        <button className="ml-2 w-[172px] whitespace-nowrap text-left [mask-image:linear-gradient(to_right,black_88%,transparent)]">Upload objects - S3 bucket aay</button>
        <button aria-label="Close tab" className="ml-2"><X className="h-3 w-3" strokeWidth={3} /></button>
      </div>
      <button aria-label="New tab" className="ml-3 text-[#8fb0b2]"><Plus className="h-4 w-4" /></button>
      <div className="ml-auto flex items-center gap-[34px] pr-4 text-[#7d9799]">
        <Minus className="h-3 w-3" />
        <Svg className="h-3 w-3" box="0 0 12 12"><rect x="1" y="3" width="7" height="8" rx="1" /><path d="M4 1h6v8" /></Svg>
        <X className="h-3.5 w-3.5" />
      </div>
    </div>

    <div className="flex h-[46px] shrink-0 items-center pl-3.5">
      <button aria-label="Back"><ArrowLeft className="h-4 w-4" strokeWidth={2.5} /></button>
      <button aria-label="Forward" className="ml-5 text-[#6fa0a3]"><ArrowRight className="h-4 w-4" strokeWidth={2.5} /></button>
      <button aria-label="Reload" className="ml-5"><RotateCw className="h-4 w-4" strokeWidth={2.5} /></button>
      <div className="ml-[18px] flex h-[34px] flex-1 items-center rounded-full bg-[#0e4950] pl-1 pr-4 text-[13px]">
        <span className="flex h-6 w-6 items-center justify-center rounded-full bg-[#055c61]"><Svg className="h-4 w-4" box="0 0 16 16"><circle cx="4" cy="5" r="2" /><path d="M8 5h6M2 11h6" strokeWidth="2" /><circle cx="12" cy="11" r="2" /></Svg></span>
        <span className="ml-2 flex-1">us-east-1.console.aws.amazon.com<span className="text-[#9fbcbe]">/s3/upload/aayush220238?region=us-east-1&amp;bucketType=general</span></span>
        <Star className="h-4 w-4" />
      </div>
      <Svg className="ml-[18px] h-4 w-4" box="0 0 16 16"><path d="M5 0h6l5 5v6l-5 5H5l-5-5V5Z" fill="#e01b1b" stroke="none" /><path d="M5 8V5M7 8V3M9 8V3M11 9V5" stroke="#fff" strokeWidth="1.500" /><path d="M4.200 8h7.500c0 3-1.500 5-3.500 5s-3-2-4-5Z" fill="#fff" stroke="none" /></Svg>
      <Puzzle className="ml-5 h-[18px] w-[18px]" strokeWidth={2.3} />
      <Rule className="ml-4 h-4 bg-[#02393e]" />
      <Svg className="ml-4 h-5 w-5"><circle cx="10" cy="10" r="10" fill="#1d2420" stroke="none" /><path d="M5 6l5-2 4 5-3 4 3 4" stroke="#8a6d3a" strokeWidth="2" /></Svg>
      <button aria-label="Menu" className="ml-[18px] mr-3"><MoreVertical className="h-[18px] w-[18px]" strokeWidth={2.5} /></button>
    </div>

    <nav aria-label="Bookmarks" className="flex h-[35px] shrink-0 items-center gap-[18px] border-b border-[#4a8589] pb-1 pl-3 pr-4 text-[11px]">
      {bookmarks.map(([name, icon]) => (
        <a key={name} href="#bookmark" className="flex items-center gap-1.5 whitespace-nowrap">{icon}{name}</a>
      ))}
      <Rule className="ml-auto h-4 bg-[#02393e]" />
      <a href="#all" className="flex items-center gap-2"><Folder className="h-4 w-4 text-[#c3d3d4]" />All Bookmarks</a>
    </nav>

    <div className="flex min-h-0 flex-1">
      <div className="flex min-w-0 flex-1 flex-col">
        <header className="flex h-[41px] shrink-0 items-center border-b border-[#545b64] bg-[#232f3e] pl-[17px] text-xs">
          <div className="flex w-[34px] flex-col">
            <span className="text-base font-semibold leading-4">aws</span>
            <svg viewBox="0 0 34 9" className="h-[9px] w-[34px]" aria-hidden="true"><path d="M1 1c9 7 20 7 28 1M25 1l6-.5-1 5.500" fill="none" stroke="#ff9900" strokeWidth="2" /></svg>
          </div>
          <span className="ml-[15px]"><NavRule /></span>
          <button className="ml-4 flex items-center gap-2.5 text-[11px] font-bold">
            <svg viewBox="0 0 16 16" className="h-4 w-4" fill="#fff" aria-hidden="true">{[0, 6, 12].map((y) => [0, 6, 12].map((x) => <rect key={`${x}-${y}`} x={x} y={y} width="4" height="4" />))}</svg>
            Services
          </button>
          <label className="ml-[18px] flex h-[30px] w-[540px] items-center rounded-sm border border-[#879596] bg-[#16191f] px-2.5 text-[13px] text-[#95a5a6]">
            <Search className="h-4 w-4 text-[#d5dbdb]" strokeWidth={2.5} />
            <input aria-label="Search services" placeholder="Search" className="ml-2 flex-1 bg-transparent italic placeholder:text-[#95a5a6]" />
            [Alt+S]
          </label>
          <div className="ml-auto flex items-center gap-4 pr-[18px] font-semibold">
            <SquareTerminal className="h-[18px] w-[18px]" /><NavRule />
            <Bell className="h-[18px] w-[18px]" /><NavRule />
            <HelpCircle className="h-[18px] w-[18px]" /><NavRule />
            <Settings className="h-[18px] w-[18px]" /><NavRule />
            <button className="flex items-center gap-1 text-[11px]">N. Virginia <span>▼</span></button><NavRule />
            <button className="flex items-center gap-1">voclabs/user3190895=A.Tamang23@wlv.ac.uk @ 3728-4277-1594 <span>▼</span></button>
          </div>
        </header>

        <div className="flex min-h-0 flex-1 bg-white text-[13px] text-[#16191f]">
          <aside className="flex w-10 shrink-0 justify-center border-r border-[#c5c9cc] pt-2.5 text-[#545b64]">
            <button aria-label="Open navigation" className="h-5"><Menu className="h-5 w-5" strokeWidth={2.5} /></button>
          </aside>
          <main className="min-w-0 flex-1 bg-[#f2f3f3]">
            <div role="status" className="h-[70px] border-b border-[#5a7d53] bg-[#1d8102] pl-3 pt-3 leading-[22px] text-white">
              <div className="flex items-center gap-2 pt-0.5 font-bold"><CircleCheck className="h-4 w-4" strokeWidth={2.5} />Upload succeeded</div>
              <div className="pl-6 font-semibold">View details below.</div>
            </div>

            <div className="px-[39px]">
              <section className="border-x border-b border-[#d5dbdb] border-b-[#879596] bg-white shadow-sm">
                <h2 className="h-[46px] border-b border-[#eaeded] bg-[#fafafa] pl-5 text-[17px] font-bold leading-6">Summary</h2>
                <div className="grid grid-cols-3 divide-x divide-[#eaeded] pb-5 pt-4 text-sm leading-[22px] text-[#545b64]">
                  <div className="pl-5"><div>Destination</div><a href="#dest" className="mt-0.5 block text-[#0073bb]">s3://aayush220238</a></div>
                  <div className="h-[53px] pl-5"><div>Succeeded</div><div className="mt-1.5 flex items-center gap-1 text-[#1d8102]"><CircleCheck className="h-4 w-4" strokeWidth={2.5} />14 files, 1.4 MB (100.00%)</div></div>
                  <div className="pl-5"><div>Failed</div><div className="mt-1.5 flex items-center gap-1 text-[#687078]"><Svg className="h-4 w-4" box="0 0 16 16"><circle cx="8" cy="8" r="7" strokeWidth="2" /><path d="M4 8h8" strokeWidth="2" strokeDasharray="2 1" /></Svg>0 files, 0 B (0%)</div></div>
                </div>
              </section>

              <div role="tablist" className="mt-8 flex h-11 border-b border-[#aab7b8] font-bold text-[#545b64]">
                <button role="tab" aria-selected="true" className="ml-0.5 h-11 border-b-[3px] border-[#16191f] px-5 pb-2.5 text-[#0073bb]">Files and folders</button>
                <Rule className="h-[30px] bg-[#aab7b8]" />
                <button role="tab" aria-selected="false" className="h-11 px-6 pb-3">Configuration</button>
              </div>

              <section className="mt-8 border border-[#d5dbdb] border-b-[#879596] bg-white shadow-sm">
                <div className="bg-[#fafafa] px-5 pb-4 pt-[18px]">
                  <h2 className="text-[17px] font-bold leading-6">Files and folders <span className="text-lg font-normal leading-6 text-[#687078]">(14 Total, 1.4 MB)</span></h2>
                  <div className="mt-5 flex items-center justify-between">
                    <label className="flex h-8 w-[513px] items-center gap-2 rounded-sm border border-[#687078] bg-white px-2"><Search className="h-4 w-4 text-[#545b64]" strokeWidth={2.5} /><input aria-label="Find by name" placeholder="Find by name" className="flex-1 italic placeholder:text-[#687078]" /></label>
                    <div className="mr-1.5 flex items-center gap-4 text-sm">
                      <button aria-label="Previous page" className="text-[#aab7b8]"><svg viewBox="0 0 10 16" className="h-4 w-2.5"><path d="M9 1L2 8l7 7" fill="none" stroke="currentColor" strokeWidth="2" /></svg></button>
                      <button className="w-3 font-bold">1</button>
                      <button className="w-3 text-[#545b64]">2</button>
                      <button aria-label="Next page" className="text-[#545b64]"><svg viewBox="0 0 10 16" className="h-4 w-2.5"><path d="M1 1l7 7-7 7" fill="none" stroke="currentColor" strokeWidth="2" /></svg></button>
                    </div>
                  </div>
                </div>
                <table className="w-full table-fixed text-left">
                  <colgroup><col className="w-[133px]" /><col className="w-[133px]" /><col className="w-[133px]" /><col className="w-[133px]" /><col className="w-[133px]" /><col /></colgroup>
                  <thead className="border-y border-[#eaeded] bg-[#fafafa] text-[#545b64]">
                    <tr className="h-10">
                      {["Name", "Folder", "Type", "Size", "Status", "Error"].map((h) => (
                        <th key={h} scope="col" className="p-0">
                          <div className={`flex h-5 items-center justify-between pl-5 ${h === "Error" ? "pr-3.5" : "border-r border-[#687078] pr-3"}`}>{h}{h !== "Name" && <SortMark />}</div>
                        </th>
                      ))}
                    </tr>
                  </thead>
                  <tbody className="text-sm">
                    {files.map(([name, cut, folder, type, size], i) => (
                      <tr key={i} className="h-8 border-t border-[#eaeded] first:border-t-0">
                        <td className="whitespace-nowrap p-0 pl-5"><a href="#file" className="inline-block border-b border-[#0073bb] leading-[18px] text-[#0073bb]">{name}</a>{cut && <span className="text-[#0073bb]">…</span>}</td>
                        <td className="p-0 pl-5">{folder}</td>
                        <td className="whitespace-nowrap p-0 pl-5">{type}</td>
                        <td className="p-0 pl-5">{size}</td>
                        <td className="p-0 pl-5 text-[13px]"><span className="flex items-center gap-1 text-[#1d8102]"><CircleCheck className="h-4 w-4" strokeWidth={2.5} />Succeeded</span></td>
                        <td className="p-0 pl-5 text-[#545b64]">-</td>
                      </tr>
                    ))}
                  </tbody>
                </table>
              </section>
            </div>
          </main>
          <aside className="flex w-10 shrink-0 justify-center border-l border-[#c5c9cc] pt-3 text-[#545b64]">
            <button aria-label="Open tools" className="h-4"><Svg className="h-4 w-4" box="0 0 16 16"><path d="M8 1l6 3.500v7L8 15l-6-3.500v-7Z" strokeWidth="2" /><circle cx="8" cy="8" r="2" fill="currentColor" /><path d="M8 8l4 3" strokeWidth="2" /></Svg></button>
          </aside>
        </div>

        <div className="flex h-[31px] shrink-0 items-center border-t border-[#545b64] bg-[#232f3e] pl-4 pr-4 text-[11px] font-semibold">
          <button className="flex items-center gap-1.5"><SquareTerminal className="h-4 w-4" />CloudShell</button>
          <button className="ml-[26px]">Feedback</button>
          <span className="ml-auto">© 2024, Amazon Web Services, Inc. or its affiliates.</span>
          <a href="#privacy" className="ml-[30px]">Privacy</a>
          <a href="#terms" className="ml-[26px]">Terms</a>
          <a href="#cookies" className="ml-[26px]">Cookie preferences</a>
        </div>
      </div>
      <div className="flex w-[17px] shrink-0 flex-col items-center justify-between bg-[#f1f1f1] py-1.5 text-[#505050]">
        <svg viewBox="0 0 8 5" className="h-[5px] w-2" aria-hidden="true"><path d="M0 5L4 0l4 5Z" fill="currentColor" /></svg>
        <span className="mb-1.5 mt-[146px] w-[13px] flex-1 bg-[#c1c1c1]" />
        <svg viewBox="0 0 8 5" className="h-[5px] w-2" aria-hidden="true"><path d="M0 0l4 5 4-5Z" fill="#8a8a8a" /></svg>
      </div>
    </div>
    <Taskbar large={false} />
  </section>
);

export default function App() {
  return (
    <div className="flex h-screen w-full overflow-hidden">
      <Word />
      <Browser />
    </div>
  );
}
